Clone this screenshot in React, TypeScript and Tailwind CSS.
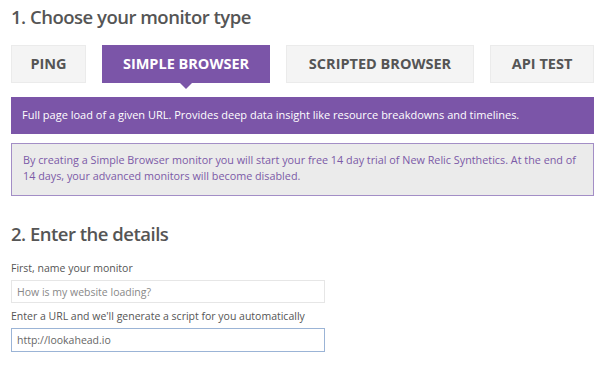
const tabs = [
  { label: "PING", width: "w-[75px]", active: false },
  { label: "SIMPLE BROWSER", width: "w-[168px]", active: true },
  { label: "SCRIPTED BROWSER", width: "w-[188px]", active: false },
  { label: "API TEST", width: "w-[104px]", active: false },
];

export default function App() {
  return (
    <div className="w-[600px] h-[365px] overflow-hidden bg-white pl-[11px] pr-[6px] font-['Open_Sans',sans-serif] text-[#555]">
      <h1 className="pt-[3px] text-[18.5px] leading-[28px] tracking-[-0.5px] font-semibold text-[#555]">
        1. Choose your monitor type
      </h1>

      <div className="mt-[14px] flex justify-between">
        {tabs.map((tab) => (
          <div
            key={tab.label}
            className={`relative ${tab.width} h-[38px] flex items-center justify-center text-[14.5px] font-bold ${
              tab.active
                ? "bg-[#7b55a8] text-white"
                : "bg-[#f4f4f4] border border-[#ebebeb] text-[#555]"
            }`}
          >
            {tab.label}
            {tab.active && (
              <span className="absolute left-1/2 -translate-x-1/2 top-full w-0 h-0 border-l-[6px] border-r-[6px] border-t-[6px] border-l-transparent border-r-transparent border-t-[#7b55a8]" />
            )}
          </div>
        ))}
      </div>

      <div className="mt-[14px] h-[37px] flex items-center px-[11px] bg-[#7b55a8] text-white text-[11px]">
        Full page load of a given URL. Provides deep data insight like resource
        breakdowns and timelines.
      </div>

      <div className="mt-[9px] h-[53px] pl-[11px] pr-[2px] pt-[8px] bg-[#ebebeb] border border-[#a38ec6] text-[#7b5aa7] text-[10.8px] leading-[16px]">
        By creating a Simple Browser monitor you will start your free 14 day
        trial of New Relic Synthetics. At the end of
        <br />
        14 days, your advanced monitors will become disabled.
      </div>

      <h2 className="mt-[24px] text-[18.5px] leading-[28px] tracking-[-0.5px] font-semibold text-[#555]">
        2. Enter the details
      </h2>

      <label className="block mt-[12px] text-[10.5px] leading-[16px] text-[#555]">
        First, name your monitor
      </label>
      <input
        className="block mt-[4px] w-[314px] h-[23px] px-[5px] border border-[#e6e6e6] bg-white text-[10.5px] text-[#666] placeholder:text-[#888] outline-none"
        placeholder="How is my website loading?"
      />

      <label className="block mt-[5px] text-[10.5px] leading-[16px] text-[#555]">
        Enter a URL and we'll generate a script for you automatically
      </label>
      <input
        className="block mt-[4px] w-[314px] h-[24px] px-[5px] border border-[#9bb4d6] bg-white text-[10.5px] text-[#666] outline-none"
        defaultValue="http://lookahead.io"
      />
    </div>
  );
}
